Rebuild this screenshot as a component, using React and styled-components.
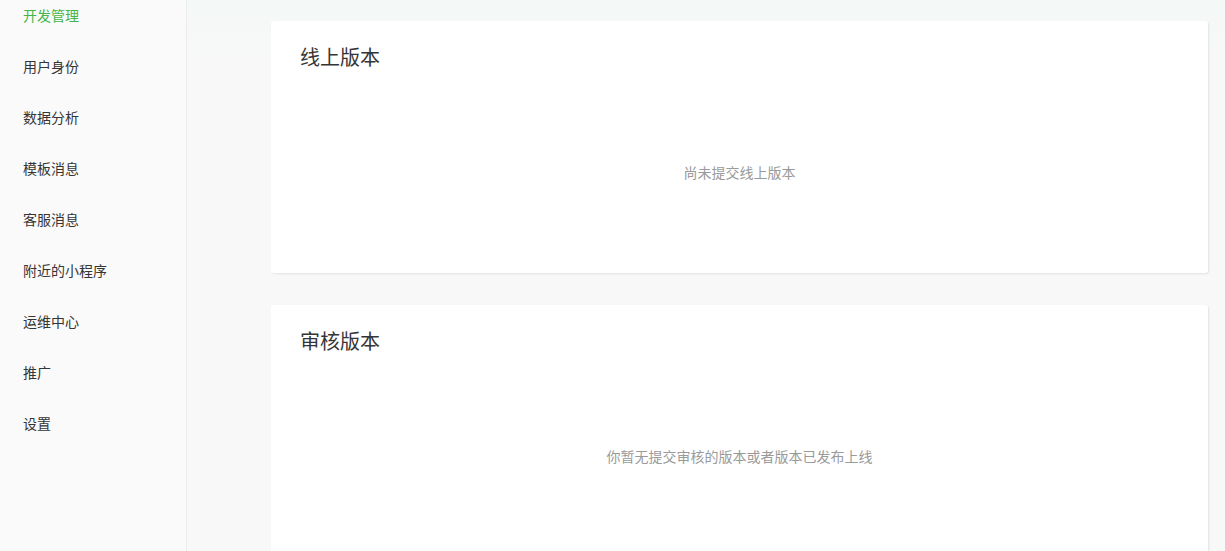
import React from "react";
import styled, { createGlobalStyle } from "styled-components";

const GlobalStyle = createGlobalStyle`
  html, body { margin: 0; padding: 0; overflow: hidden; }
  body {
    font-family: "Noto Sans CJK SC", "Noto Sans", "Liberation Sans", sans-serif;
    background: #f8f8f8;
  }
`;

const Layout = styled.div`
  display: flex;
  width: 100%;
  height: 100vh;
  overflow: hidden;
`;

const Sidebar = styled.aside`
  width: 186px;
  flex-shrink: 0;
  background: #fafafa;
  border-right: 1px solid #ebebeb;
`;

const Nav = styled.ul`
  list-style: none;
  margin: -10px 0 0;
  padding: 0;
`;

const NavItem = styled.li`
  height: 51px;
  line-height: 51px;
  padding-left: 23px;
  font-size: 14px;
  color: ${(p) => (p.$active ? "#44b549" : "#353535")};
  cursor: pointer;
`;

const Main = styled.main`
  flex: 1;
  display: flex;
  flex-direction: column;
  gap: 32px;
  padding: 21px 17px 0 84px;
  background: linear-gradient(#f4f8f7 0, #f6f8f8 22px, #f8f8f8 60px);
`;

const Card = styled.section`
  box-sizing: border-box;
  min-height: 252px;
  flex-shrink: 0;
  background: #fff;
  border-radius: 3px;
  box-shadow: 1px 1px 2px rgba(0, 0, 0, 0.09);
  padding: 22px 30px;
`;

const Title = styled.h2`
  margin: 0 0 0 -1px;
  font-size: 20px;
  font-weight: 400;
  line-height: 28px;
  color: #353535;
`;

const Empty = styled.p`
  margin: 0;
  padding-top: 91px;
  text-align: center;
  font-size: 14px;
  line-height: 20px;
  color: #9a9a9a;
`;

const navItems = [
  "开发管理",
  "用户身份",
  "数据分析",
  "模板消息",
  "客服消息",
  "附近的小程序",
  "运维中心",
  "推广",
  "设置",
];

const cards = [
  { title: "线上版本", empty: "尚未提交线上版本" },
  { title: "审核版本", empty: "你暂无提交审核的版本或者版本已发布上线" },
];

export default function App() {
  return (
    <>
      <GlobalStyle />
      <Layout>
        <Sidebar>
          <Nav>
            {navItems.map((item, i) => (
              <NavItem key={item} $active={i === 0}>
                {item}
              </NavItem>
            ))}
          </Nav>
        </Sidebar>
        <Main>
          {cards.map((c) => (
            <Card key={c.title}>
              <Title>{c.title}</Title>
              <Empty>{c.empty}</Empty>
            </Card>
          ))}
        </Main>
      </Layout>
    </>
  );
}
